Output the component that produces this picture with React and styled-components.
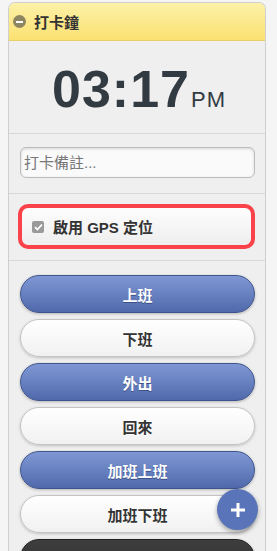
import React from 'react'
import styled, { createGlobalStyle } from 'styled-components'

const GlobalStyle = createGlobalStyle`
  html, body {
    margin: 0;
    padding: 0;
    background: #f5f5f5;
    font-family: "Liberation Sans", "Noto Sans CJK TC", sans-serif;
  }
`

const Panel = styled.div`
  width: 256px;
  margin: 2px 0 0 8px;
  border: 1px solid #cfcfcf;
  border-bottom: none;
  border-radius: 7px 7px 0 0;
  background: #efefef;
  overflow: hidden;
  height: 549px;
`

const Header = styled.div`
  display: flex;
  align-items: center;
  gap: 8px;
  height: 37px;
  padding-left: 4px;
  background: linear-gradient(#fdf1a8, #fbe172);
  border-bottom: 1px solid #e8cf63;
  font-size: 15px;
  font-weight: bold;
  color: #333;
`

const CollapseIcon = styled.span`
  display: inline-flex;
  align-items: center;
  justify-content: center;
  width: 13px;
  height: 13px;
  border-radius: 50%;
  background: #8d8661;
  &::after {
    content: '';
    width: 7px;
    height: 2px;
    background: #fff;
  }
`

const Section = styled.div`
  border-bottom: 1px solid #d8d8d8;
  padding: ${p => p.$pad};
  height: ${p => p.$h}px;
  box-sizing: border-box;
`

const ClockRow = styled.div`
  display: flex;
  align-items: baseline;
  justify-content: center;
  height: 100%;
  padding: 4px 0 0 4px;
  box-sizing: border-box;
  align-content: center;
  flex-wrap: wrap;
  color: #323a42;
  font-family: "Liberation Sans", sans-serif;
`

const Digits = styled.span`
  font-size: 52px;
  font-weight: bold;
  letter-spacing: 1px;
  line-height: 1;
`

const Meridiem = styled.span`
  font-size: 22px;
  letter-spacing: 1px;
  margin-left: 1px;
  line-height: 1;
`

const NoteInput = styled.input`
  display: block;
  width: 100%;
  height: 31px;
  box-sizing: border-box;
  border: 1px solid #bcbcbc;
  border-radius: 6px;
  background: #fafafa;
  box-shadow: inset 0 1px 3px rgba(0, 0, 0, 0.15);
  padding: 0 3px;
  font-family: "Liberation Sans", "Noto Sans CJK TC", sans-serif;
  font-size: 15px;
  color: #333;
  &::placeholder {
    color: #777;
  }
`

const GpsBox = styled.label`
  display: flex;
  align-items: center;
  gap: 9px;
  height: 45px;
  box-sizing: border-box;
  border: 4px solid #f9424a;
  border-radius: 10px;
  padding-left: 10px;
  background: linear-gradient(#fdfdfd, #eeeeee);
  font-size: 15px;
  font-weight: bold;
  color: #333;
`

const CheckMark = styled.span`
  display: inline-flex;
  align-items: center;
  justify-content: center;
  width: 12px;
  height: 12px;
  border-radius: 2px;
  background: #9a9a9a;
`

const ButtonList = styled.div`
  display: flex;
  flex-direction: column;
  gap: 6px;
  padding: 14px 10px 0 11px;
`

const PunchButton = styled.button`
  height: 38px;
  border-radius: 19px;
  font-family: "Liberation Sans", "Noto Sans CJK TC", sans-serif;
  font-size: 15px;
  font-weight: bold;
  cursor: pointer;
  ${p =>
    p.$variant === 'blue'
      ? `
    color: #fff;
    border: 1px solid #3f548c;
    background: linear-gradient(#7f98d4, #5069ab);
    text-shadow: 0 1px 0 #3a4f86;
    box-shadow: 0 1px 3px rgba(0,0,0,0.25);
  `
      : p.$variant === 'dark'
      ? `
    color: #fff;
    border: 1px solid #222;
    background: linear-gradient(#3e3e3e, #2e2e2e);
    box-shadow: 0 1px 3px rgba(0,0,0,0.25);
  `
      : `
    color: #333;
    border: 1px solid #c4c4c4;
    background: linear-gradient(#ffffff, #f1f1f1);
    text-shadow: 0 1px 0 #fff;
    box-shadow: 0 1px 3px rgba(0,0,0,0.2);
  `}
`

const Fab = styled.button`
  position: fixed;
  right: 19px;
  bottom: 21px;
  width: 41px;
  height: 41px;
  border-radius: 50%;
  border: none;
  background: #5a74b9;
  box-shadow: 0 2px 5px rgba(0, 0, 0, 0.35);
  display: flex;
  align-items: center;
  justify-content: center;
  padding: 0;
`

const buttons = [
  { label: '上班', variant: 'blue' },
  { label: '下班', variant: 'white' },
  { label: '外出', variant: 'blue' },
  { label: '回來', variant: 'white' },
  { label: '加班上班', variant: 'blue' },
  { label: '加班下班', variant: 'white' },
  { label: '', variant: 'dark' },
]

export default function App() {
  return (
    <>
      <GlobalStyle />
      <Panel>
        <Header>
          <CollapseIcon />
          打卡鐘
        </Header>
        <Section $h={93}>
          <ClockRow>
            <Digits>03:17</Digits>
            <Meridiem>PM</Meridiem>
          </ClockRow>
        </Section>
        <Section $h={60} $pad="13px 10px 0 11px">
          <NoteInput placeholder="打卡備註..." />
        </Section>
        <Section $h={67} $pad="10px 10px 0 9px">
          <GpsBox>
            <CheckMark>
              <svg width="9" height="8" viewBox="0 0 9 8">
                <path d="M1 4.2 L3.4 6.5 L8 1.5" fill="none" stroke="#fff" strokeWidth="1.8" />
              </svg>
            </CheckMark>
            啟用 GPS 定位
          </GpsBox>
        </Section>
        <ButtonList>
          {buttons.map((b, i) => (
            <PunchButton key={i} $variant={b.variant}>
              {b.label}
            </PunchButton>
          ))}
        </ButtonList>
      </Panel>
      <Fab aria-label="新增">
        <svg width="16" height="16" viewBox="0 0 16 16">
          <path d="M8 1 V15 M1 8 H15" stroke="#fff" strokeWidth="3" />
        </svg>
      </Fab>
    </>
  )
}
